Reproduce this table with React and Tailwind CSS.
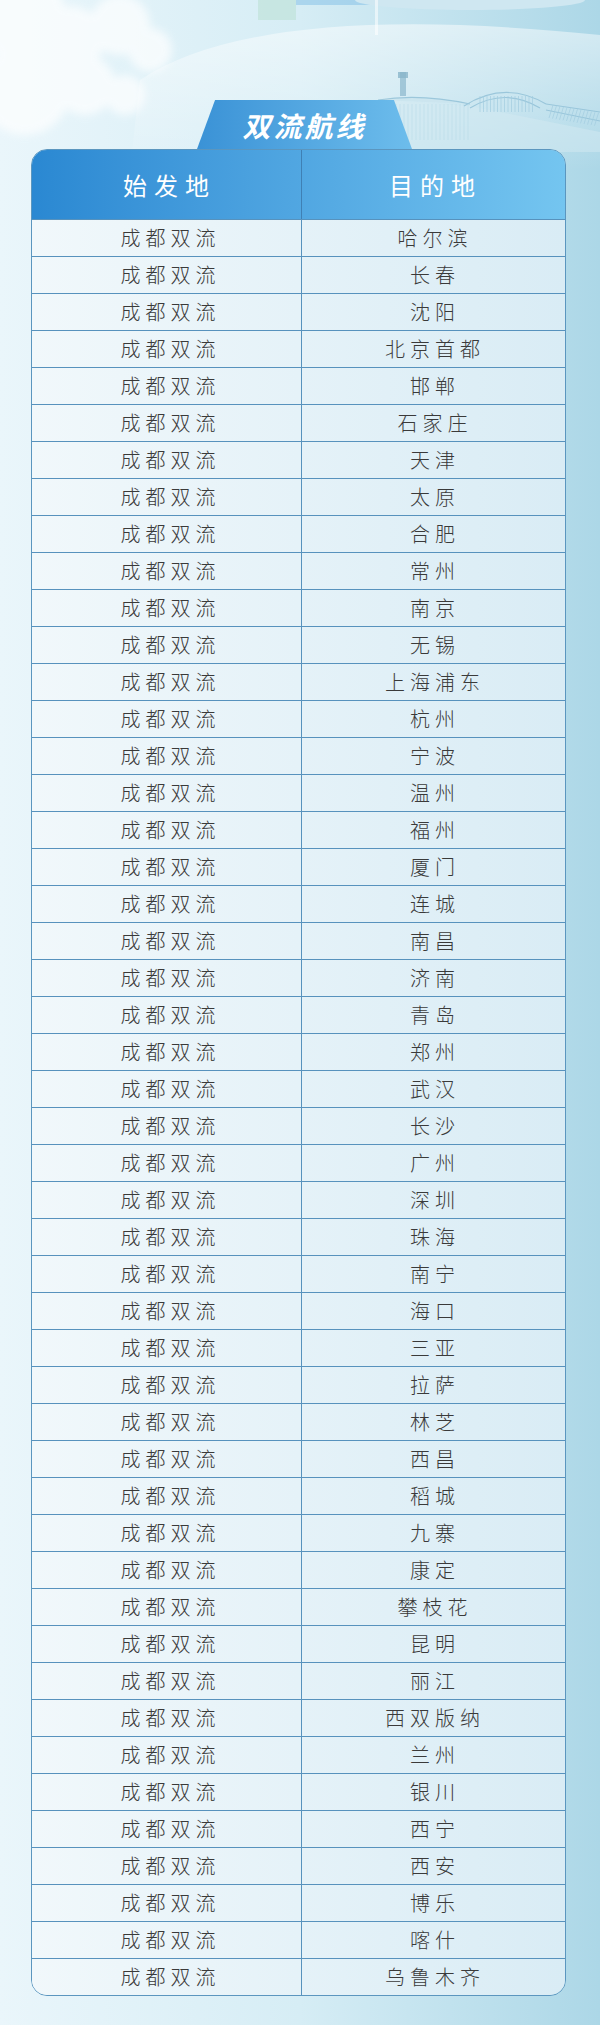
const routes = [
  '哈尔滨', '长春', '沈阳', '北京首都', '邯郸', '石家庄', '天津', '太原',
  '合肥', '常州', '南京', '无锡', '上海浦东', '杭州', '宁波', '温州',
  '福州', '厦门', '连城', '南昌', '济南', '青岛', '郑州', '武汉',
  '长沙', '广州', '深圳', '珠海', '南宁', '海口', '三亚', '拉萨',
  '林芝', '西昌', '稻城', '九寨', '康定', '攀枝花', '昆明', '丽江',
  '西双版纳', '兰州', '银川', '西宁', '西安', '博乐', '喀什', '乌鲁木齐',
]

function SkyArt() {
  return (
    <svg className="absolute left-0 top-0" width="600" height="170" viewBox="0 0 600 170">
      <defs>
        <filter id="soft" x="-50%" y="-50%" width="200%" height="200%">
          <feGaussianBlur stdDeviation="4" />
        </filter>
        <linearGradient id="hill" x1="0" y1="0" x2="0" y2="1">
          <stop offset="0" stopColor="#ffffff" stopOpacity="0.5" />
          <stop offset="1" stopColor="#ffffff" stopOpacity="0" />
        </linearGradient>
      </defs>
      {/* clouds, left */}
      <g fill="#ffffff" opacity="0.7" filter="url(#soft)">
        <circle cx="20" cy="15" r="45" />
        <circle cx="70" cy="40" r="34" />
        <circle cx="120" cy="25" r="30" />
        <circle cx="150" cy="50" r="22" />
        <circle cx="25" cy="90" r="45" />
        <circle cx="85" cy="85" r="30" />
        <circle cx="125" cy="95" r="20" />
      </g>
      <path d="M140 80 Q 260 0 600 35 L600 170 L130 170 Z" fill="url(#hill)" />
      {/* top stuff */}
      <rect x="258" y="0" width="38" height="20" fill="#b9e0d2" opacity="0.55" />
      <rect x="296" y="0" width="78" height="5" fill="#7fbde6" opacity="0.5" />
      <ellipse cx="470" cy="0" rx="115" ry="10" fill="#cfe7f1" />
      <rect x="375" y="0" width="3" height="35" fill="#ffffff" opacity="0.55" />
      {/* terminal */}
      <path d="M378 100 L470 106 L600 132 L600 152 L378 152 Z" fill="#d3eaf2" opacity="0.5" />
      <g stroke="#8fbfd6" strokeWidth="1.2" fill="none" opacity="0.8">
        <path d="M378 100 Q 420 93 470 104" fill="#cbe5ef" />
        <path d="M464 106 Q 505 80 546 104" />
        <path d="M470 108 Q 505 87 540 108" />
        <path d="M546 104 L600 112" />
        <path d="M546 110 L600 121" />
      </g>
      <g stroke="#a3cde0" strokeWidth="1" opacity="0.7">
        {Array.from({ length: 14 }).map((_, i) => (
          <line key={i} x1={553 + i * 3.5} y1={105 + i * 0.6} x2={549 + i * 3.5} y2={118 + i * 0.6} />
        ))}
        {Array.from({ length: 16 }).map((_, i) => (
          <line key={'a' + i} x1={480 + i * 3.5} y1={96} x2={480 + i * 3.5} y2={112} />
        ))}
        {Array.from({ length: 22 }).map((_, i) => (
          <line key={'b' + i} x1={384 + i * 4} y1={104} x2={384 + i * 4} y2={140} opacity="0.4" />
        ))}
      </g>
      <rect x="400" y="72" width="6" height="24" fill="#93bdd1" opacity="0.8" />
      <rect x="398" y="72" width="10" height="6" fill="#8ab5cb" opacity="0.8" />
    </svg>
  )
}

export default function App() {
  return (
    <div className="relative w-[600px] min-h-[2025px] overflow-hidden bg-gradient-to-r from-[#eaf6fb] via-[#d6edf5] to-[#acd7e7] font-['Noto_Sans_CJK_SC',sans-serif]">
      <SkyArt />
      <div className="relative pt-[100px]">
        <div className="ml-[197px] flex h-[49px] w-[215px] items-center justify-center bg-gradient-to-r from-[#3a92d6] to-[#6dbdec] [clip-path:polygon(8.4%_0,91.6%_0,100%_100%,0_100%)]">
          <span className="text-[28px] font-bold italic leading-none tracking-[3px] text-white">双流航线</span>
        </div>
        <div className="ml-[31px] w-[535px] overflow-hidden rounded-[16px] border border-[#5b96bf]">
          <div className="grid h-[69px] grid-cols-[270px_1fr] bg-gradient-to-r from-[#2a88d2] to-[#74c5f0] text-[24px] tracking-[7px] text-white">
            <div className="flex items-center justify-center border-r border-[#3f80b4] pl-[6px]">始发地</div>
            <div className="flex items-center justify-center pl-[4px]">目的地</div>
          </div>
          <div className="bg-gradient-to-r from-[#f1f8fb] to-[#d9ecf5]">
            {routes.map((dest) => (
              <div key={dest} className="grid h-[37px] grid-cols-[270px_1fr] border-t border-[#5792bd] text-[20px] font-light tracking-[5px] text-[#3a3a3a]">
                <div className="flex items-center justify-center border-r border-[#5792bd] pl-[8px]">成都双流</div>
                <div className="flex items-center justify-center pl-[3px]">{dest}</div>
              </div>
            ))}
          </div>
        </div>
      </div>
    </div>
  )
}
